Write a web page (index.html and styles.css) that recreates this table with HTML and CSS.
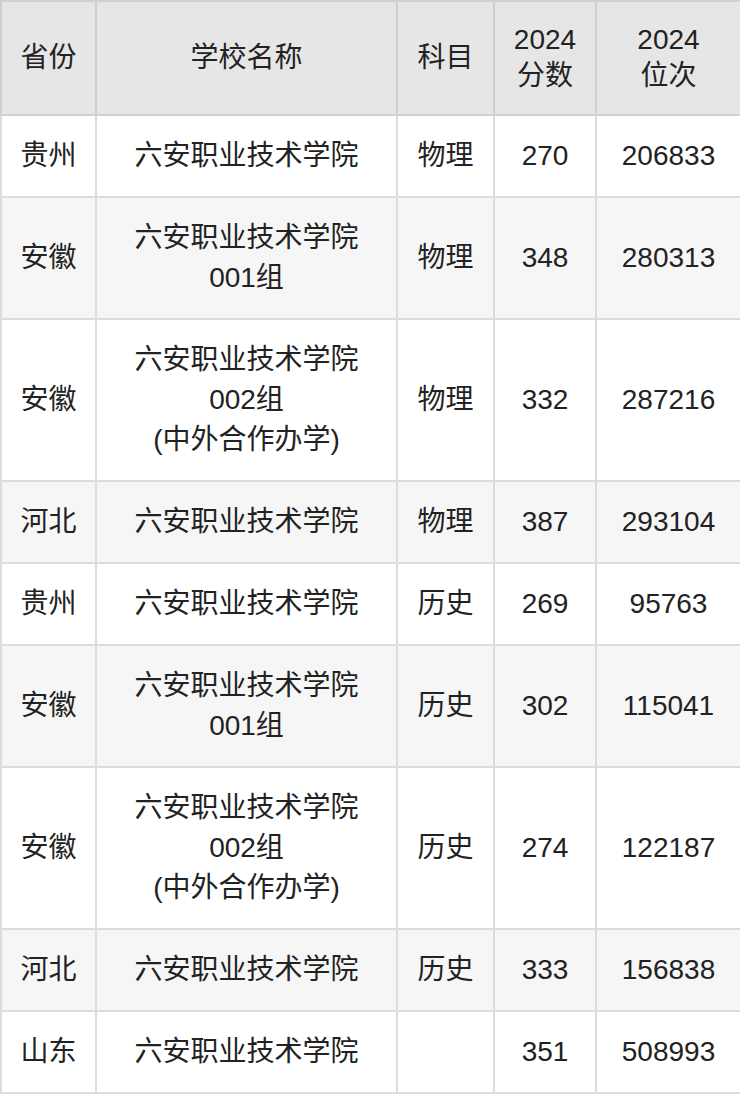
FILE: index.html
```html
<!DOCTYPE html>
<html lang="zh-CN">
<head>
<meta charset="utf-8">
<title>六安职业技术学院 分数线</title>
<link rel="stylesheet" href="styles.css">
</head>
<body>
<table class="score-table">
  <colgroup>
    <col class="c-prov">
    <col class="c-school">
    <col class="c-subj">
    <col class="c-score">
    <col class="c-rank">
  </colgroup>
  <thead>
    <tr>
      <th>省份</th>
      <th>学校名称</th>
      <th>科目</th>
      <th>2024<br>分数</th>
      <th>2024<br>位次</th>
    </tr>
  </thead>
  <tbody>
    <tr><td>贵州</td><td>六安职业技术学院</td><td>物理</td><td>270</td><td>206833</td></tr>
    <tr><td>安徽</td><td>六安职业技术学院<br>001组</td><td>物理</td><td>348</td><td>280313</td></tr>
    <tr><td>安徽</td><td>六安职业技术学院<br>002组<br>(中外合作办学)</td><td>物理</td><td>332</td><td>287216</td></tr>
    <tr><td>河北</td><td>六安职业技术学院</td><td>物理</td><td>387</td><td>293104</td></tr>
    <tr><td>贵州</td><td>六安职业技术学院</td><td>历史</td><td>269</td><td>95763</td></tr>
    <tr><td>安徽</td><td>六安职业技术学院<br>001组</td><td>历史</td><td>302</td><td>115041</td></tr>
    <tr><td>安徽</td><td>六安职业技术学院<br>002组<br>(中外合作办学)</td><td>历史</td><td>274</td><td>122187</td></tr>
    <tr><td>河北</td><td>六安职业技术学院</td><td>历史</td><td>333</td><td>156838</td></tr>
    <tr><td>山东</td><td>六安职业技术学院</td><td></td><td>351</td><td>508993</td></tr>
  </tbody>
</table>
</body>
</html>
```
FILE: styles.css
```css
html, body {
  margin: 0;
  padding: 0;
  background: #ffffff;
}

.score-table {
  width: 740px;
  border-collapse: collapse;
  table-layout: fixed;
  font-family: "Liberation Sans", "Noto Sans CJK SC", sans-serif;
  font-size: 28px;
  color: #222222;
}

.c-prov { width: 95px; }
.c-school { width: 301px; }
.c-subj { width: 97px; }
.c-score { width: 102px; }
.c-rank { width: 145px; }

.score-table th,
.score-table td {
  border: 2px solid #dcdcdc;
  text-align: center;
  vertical-align: middle;
  padding: 20px 0;
}

.score-table th {
  background: #e6e6e6;
  font-weight: normal;
  line-height: 36px;
  border-color: #d0d0d0;
}

.score-table td {
  line-height: 40px;
}

.score-table tbody tr:nth-child(even) td {
  background: #f6f6f6;
}
```
